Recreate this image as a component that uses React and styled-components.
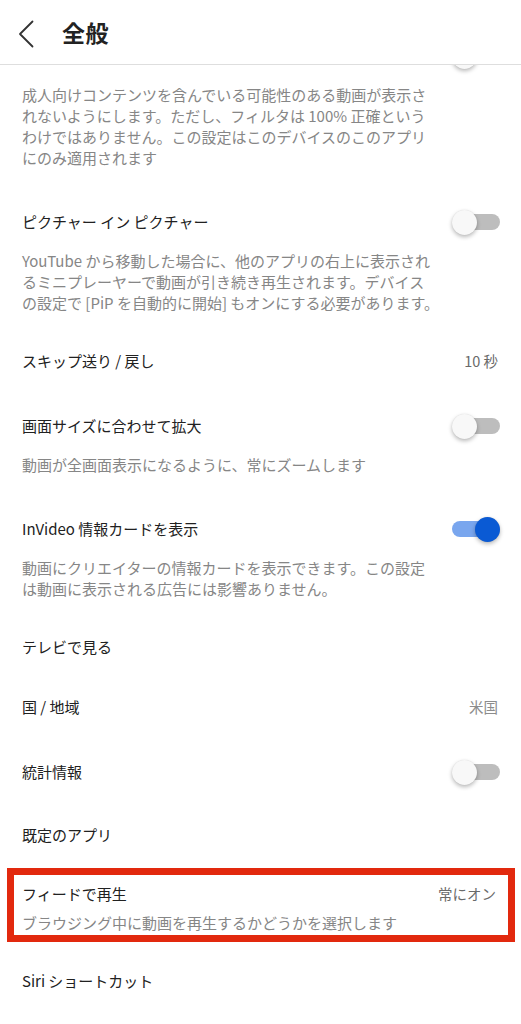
import React from "react";
import styled, { createGlobalStyle } from "styled-components";

const GlobalStyle = createGlobalStyle`
  html, body { margin: 0; padding: 0; background: #ffffff; }
  body {
    font-family: "Noto Sans CJK JP", "Noto Sans", sans-serif;
    -webkit-font-smoothing: antialiased;
  }
`;

const Screen = styled.div`
  position: relative;
  width: 521px;
  height: 1024px;
  overflow: hidden;
  background: #ffffff;
`;

const Header = styled.header`
  position: absolute;
  top: 0;
  left: 0;
  right: 0;
  height: 64px;
  z-index: 2;
  display: flex;
  align-items: center;
  padding-left: 18px;
  background: #ffffff;
  border-bottom: 1px solid #dedede;
`;

const BackButton = styled.button`
  display: flex;
  align-items: center;
  justify-content: center;
  width: 16px;
  height: 28px;
  padding: 0;
  border: none;
  background: transparent;
  margin-top: 4px;
`;

const HeaderTitle = styled.h1`
  margin: 0 0 0 28px;
  font-size: 23px;
  font-weight: 700;
  color: #222222;
  letter-spacing: 0.5px;
`;

const List = styled.div`
  padding-top: 24px;
`;

const Item = styled.div`
  padding: ${(p) => p.$pt ?? 20}px 21px ${(p) => p.$pb ?? 19}px 22px;
`;

const Row = styled.div`
  display: flex;
  align-items: center;
  justify-content: space-between;
  height: 24px;
`;

const Title = styled.span`
  font-size: 15px;
  line-height: 24px;
  color: #212121;
`;

const Value = styled.span`
  font-size: 14.5px;
  line-height: 24px;
  color: ${(p) => (p.$light ? "#8c8c8c" : "#6a6a6a")};
  margin-right: 2px;
`;

const Desc = styled.p`
  margin: ${(p) => p.$mt ?? 16}px 0 0 0;
  font-size: 15px;
  line-height: 21px;
  color: #868686;
  white-space: nowrap;
`;

const FeedBox = styled.div`
  margin: 2px 6px 0 7px;
  border: 7px solid #e2290e;
  padding: 7px 10px 2px 8px;
`;

const ToggleWrap = styled.div`
  position: relative;
  width: 48px;
  height: 25px;
  flex-shrink: 0;
  margin-left: auto;
`;

const Track = styled.div`
  position: absolute;
  top: 4.5px;
  ${(p) => (p.$on ? "left: 0;" : "right: 0;")}
  width: 44px;
  height: 16px;
  border-radius: 8px;
  background: ${(p) => (p.$on ? "#79a6ee" : "#bdbdbd")};
`;

const Knob = styled.div`
  position: absolute;
  top: 0;
  ${(p) => (p.$on ? "right: 0;" : "left: 0;")}
  width: 25px;
  height: 25px;
  border-radius: 50%;
  background: ${(p) => (p.$on ? "#0a5ad4" : "#f8f8f8")};
  box-shadow: 0 2px 4px rgba(0, 0, 0, 0.28), 0 0 1px rgba(0, 0, 0, 0.12);
`;

const Toggle = ({ on }) => (
  <ToggleWrap>
    <Track $on={on} />
    <Knob $on={on} />
  </ToggleWrap>
);

const Lines = ({ lines }) =>
  lines.map((l, i) => (
    <React.Fragment key={i}>
      {i > 0 && <br />}
      {l}
    </React.Fragment>
  ));

const Setting = ({ title, value, lightValue, toggle, desc, pt, pb }) => (
  <Item $pt={pt} $pb={pb}>
    <Row>
      {title && <Title>{title}</Title>}
      {value && <Value $light={lightValue}>{value}</Value>}
      {toggle !== undefined && <Toggle on={toggle} />}
    </Row>
    {desc && (
      <Desc>
        <Lines lines={desc} />
      </Desc>
    )}
  </Item>
);

export default function App() {
  return (
    <Screen>
      <GlobalStyle />
      <Header>
        <BackButton aria-label="戻る">
          <svg width="16" height="28" viewBox="0 0 16 28">
            <polyline
              points="14.5,1.5 2,14 14.5,26.5"
              fill="none"
              stroke="#333333"
              strokeWidth="1.8"
              strokeLinecap="round"
              strokeLinejoin="round"
            />
          </svg>
        </BackButton>
        <HeaderTitle>全般</HeaderTitle>
      </Header>
      <List>
        <Setting
          toggle={false}
          pb={22}
          desc={[
            "成人向けコンテンツを含んでいる可能性のある動画が表示さ",
            "れないようにします。ただし、フィルタは 100% 正確という",
            "わけではありません。この設定はこのデバイスのこのアプリ",
            "にのみ適用されます",
          ]}
        />
        <Setting
          title="ピクチャー イン ピクチャー"
          toggle={false}
          desc={[
            "YouTube から移動した場合に、他のアプリの右上に表示され",
            "るミニプレーヤーで動画が引き続き再生されます。デバイス",
            "の設定で [PiP を自動的に開始] もオンにする必要があります。",
          ]}
          pb={16}
        />
        <Setting title="スキップ送り / 戻し" value="10 秒" />
        <Setting
          title="画面サイズに合わせて拡大"
          toggle={false}
          pt={22}
          pb={22}
          desc={["動画が全画面表示になるように、常にズームします"]}
        />
        <Setting
          title="InVideo 情報カードを表示"
          toggle={true}
          desc={[
            "動画にクリエイターの情報カードを表示できます。この設定",
            "は動画に表示される広告には影響ありません。",
          ]}
          pb={16}
        />
        <Setting title="テレビで見る" pb={16} />
        <Setting title="国 / 地域" value="米国" lightValue pb={21} />
        <Setting title="統計情報" toggle={false} />
        <Setting title="既定のアプリ" />
        <FeedBox>
          <Row>
            <Title>フィードで再生</Title>
            <Value>常にオン</Value>
          </Row>
          <Desc $mt={6}>ブラウジング中に動画を再生するかどうかを選択します</Desc>
        </FeedBox>
        <Setting title="Siri ショートカット" pt={27} />
      </List>
    </Screen>
  );
}
